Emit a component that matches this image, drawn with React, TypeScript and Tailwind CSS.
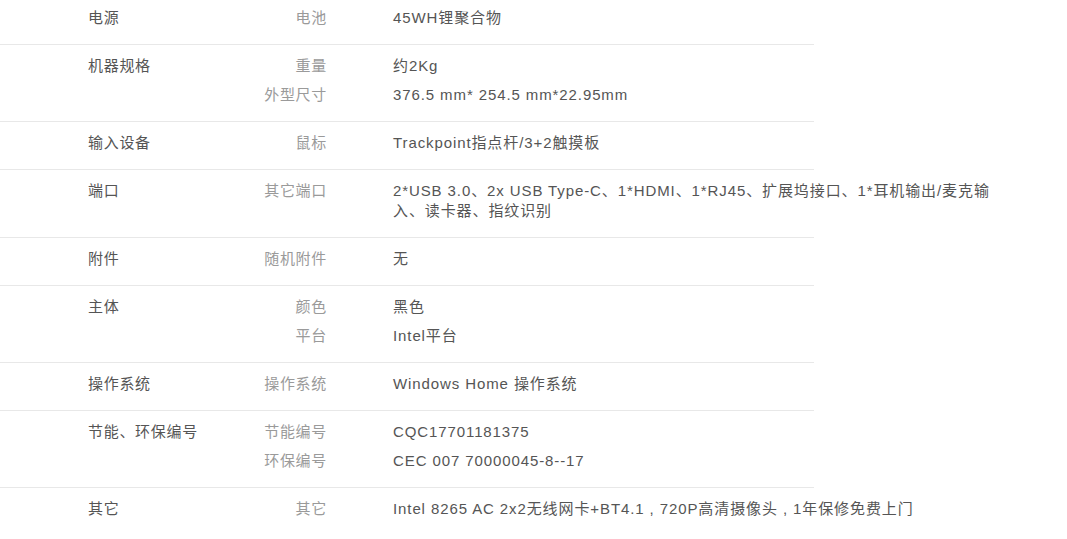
import React from "react";

type Spec = { label: string; value: string };
type Group = { title: string; items: Spec[] };

const groups: Group[] = [
  { title: "电源", items: [{ label: "电池", value: "45WH锂聚合物" }] },
  {
    title: "机器规格",
    items: [
      { label: "重量", value: "约2Kg" },
      { label: "外型尺寸", value: "376.5 mm* 254.5 mm*22.95mm" },
    ],
  },
  { title: "输入设备", items: [{ label: "鼠标", value: "Trackpoint指点杆/3+2触摸板" }] },
  {
    title: "端口",
    items: [
      {
        label: "其它端口",
        value:
          "2*USB 3.0、2x USB Type-C、1*HDMI、1*RJ45、扩展坞接口、1*耳机输出/麦克输入、读卡器、指纹识别",
      },
    ],
  },
  { title: "附件", items: [{ label: "随机附件", value: "无" }] },
  {
    title: "主体",
    items: [
      { label: "颜色", value: "黑色" },
      { label: "平台", value: "Intel平台" },
    ],
  },
  { title: "操作系统", items: [{ label: "操作系统", value: "Windows Home 操作系统" }] },
  {
    title: "节能、环保编号",
    items: [
      { label: "节能编号", value: "CQC17701181375" },
      { label: "环保编号", value: "CEC 007 70000045-8--17" },
    ],
  },
  {
    title: "其它",
    items: [{ label: "其它", value: "Intel 8265 AC 2x2无线网卡+BT4.1 , 720P高清摄像头 , 1年保修免费上门" }],
  },
];

const SpecRow = ({ group, last }: { group: Group; last: boolean }) => {
  return (
    <div className={`w-[814px] pt-[11px] pb-[16px] ${last ? "" : "border-b border-[#e8e8e8]"}`}>
      <div className="flex pl-[88px]">
        <div className="w-[160px] shrink-0 text-[#555] leading-5">{group.title}</div>
        <div className="flex flex-col gap-[9px]">
          {group.items.map((item) => (
            <div key={item.label} className="flex">
              <div className="w-[79px] shrink-0 text-right text-[#9a9a9a] leading-5">{item.label}</div>
              <div className="w-[610px] shrink-0 pl-[66px] box-content text-[#555] leading-5 tracking-[0.9px]">
                {item.value}
              </div>
            </div>
          ))}
        </div>
      </div>
    </div>
  );
};

export default function App() {
  return (
    <div
      className="w-[1067px] h-[539px] overflow-hidden bg-white text-[15px] tracking-[0.7px]"
      style={{ fontFamily: '"Liberation Sans", Arial, "Noto Sans CJK SC", sans-serif' }}
    >
      <div className="-mt-[3px]">
        {groups.map((g, i) => (
          <SpecRow key={g.title} group={g} last={i === groups.length - 1} />
        ))}
      </div>
    </div>
  );
}
